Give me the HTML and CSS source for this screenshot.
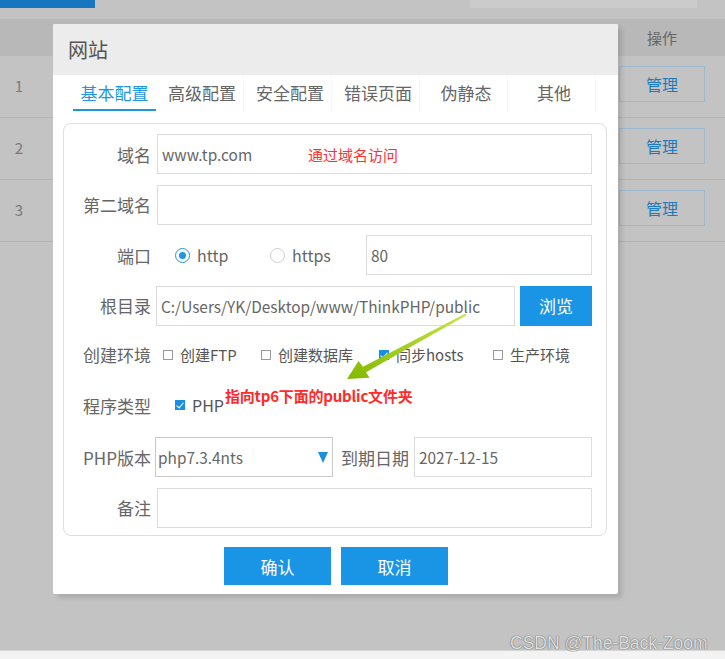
FILE: index.html
```html
<!DOCTYPE html>
<html lang="zh">
<head>
<meta charset="utf-8">
<title>网站</title>
<link rel="stylesheet" href="styles.css">
</head>
<body>
<div class="page">
  <div class="topbar">
    <div class="topbtn"></div>
    <div class="search"></div>
  </div>
  <div class="thead"><span class="op">操作</span></div>
  <div class="trow"><span class="num">1</span><span class="mgr">管理</span></div>
  <div class="trow"><span class="num">2</span><span class="mgr">管理</span></div>
  <div class="trow"><span class="num">3</span><span class="mgr">管理</span></div>
  <div class="spacer"></div>
  <div class="bottomstrip"></div>
</div>

<div class="modal">
  <div class="mhead">网站</div>
  <div class="tabs">
    <div class="tab active">基本配置</div>
    <div class="tab">高级配置</div>
    <div class="tab">安全配置</div>
    <div class="tab">错误页面</div>
    <div class="tab">伪静态</div>
    <div class="tab">其他</div>
  </div>
  <div class="panel">
    <div class="frow">
      <div class="lbl">域名</div>
      <div class="inp">www.tp.com</div>
    </div>
    <div class="frow">
      <div class="lbl">第二域名</div>
      <div class="inp"></div>
    </div>
    <div class="frow">
      <div class="lbl">端口</div>
      <div class="radios">
        <div class="ritem r1"><span class="radio on"></span><span>http</span></div>
        <div class="ritem"><span class="radio"></span><span>https</span></div>
      </div>
      <div class="inp">80</div>
    </div>
    <div class="frow">
      <div class="lbl">根目录</div>
      <div class="inp path">C:/Users/YK/Desktop/www/ThinkPHP/public</div>
      <div class="browse">浏览</div>
    </div>
    <div class="frow up">
      <div class="lbl">创建环境</div>
      <div class="checks">
        <div class="citem w1"><span class="cb"></span><span>创建FTP</span></div>
        <div class="citem w2"><span class="cb"></span><span>创建数据库</span></div>
        <div class="citem w3"><span class="cb on"></span><span>同步hosts</span></div>
        <div class="citem"><span class="cb"></span><span>生产环境</span></div>
      </div>
    </div>
    <div class="frow up">
      <div class="lbl">程序类型</div>
      <div class="checks prog">
        <div class="citem"><span class="cb on"></span><span class="php">PHP</span></div>
      </div>
    </div>
    <div class="frow">
      <div class="lbl">PHP版本</div>
      <div class="select"><span>php7.3.4nts</span><span class="tri"></span></div>
      <div class="lbl2">到期日期</div>
      <div class="inp">2027-12-15</div>
    </div>
    <div class="frow">
      <div class="lbl">备注</div>
      <div class="inp"></div>
    </div>
  </div>
  <div class="actions">
    <div class="btn">确认</div>
    <div class="btn">取消</div>
  </div>
</div>

<div class="note1">通过域名访问</div>
<div class="note2">指向tp6下面的public文件夹</div>
<svg class="arrow" width="130" height="75" viewBox="0 0 130 75">
  <defs>
    <linearGradient id="ag" x1="1" y1="0" x2="0" y2="1">
      <stop offset="0" stop-color="#c8e44a"/>
      <stop offset="1" stop-color="#84b900"/>
    </linearGradient>
  </defs>
  <polygon points="125.5,3.4 23,56.8 18.5,51 7,69 29.5,67.8 26,62.2 126.5,5.2" fill="url(#ag)"/>
</svg>
<div class="watermark">CSDN @The-Back-Zoom</div>
</body>
</html>
```

FILE: styles.css
```css
* { box-sizing: border-box; }
html, body { margin: 0; padding: 0; }
body {
  width: 725px;
  height: 659px;
  overflow: hidden;
  position: relative;
  background: #c3c3c3;
  font-family: "Noto Sans CJK SC", "Noto Sans", sans-serif;
  color: #666;
}
.page { height: 659px; display: flex; flex-direction: column; }
.topbar { height: 19px; display: flex; justify-content: space-between; }
.topbtn { width: 95px; height: 8px; background: #1677bf; }
.search { width: 227px; height: 8px; background: #cbcbcb; margin-right: 28px; }
.thead { height: 37px; background: #b8b8b8; display: flex; align-items: center; }
.op { margin-left: auto; width: 86px; margin-right: 20px; text-align: center; font-size: 15px; color: #666; }
.trow { height: 62px; border-bottom: 1px solid #b4b4b4; display: flex; align-items: center; }
.num { width: 38px; text-align: center; font-size: 15px; color: #7a7a7a; margin-bottom: 2px; }
.mgr {
  margin-left: auto; margin-right: 20px; width: 86px; height: 36px; margin-bottom: 5px;
  border: 1px solid #9db9ce; color: #1d7bbd; font-size: 16px;
  display: flex; align-items: center; justify-content: center;
}
.spacer { flex: 1; }
.bottomstrip { height: 9px; background: #f3f3f3; border-top: 1px solid #d6d6d6; }

.modal {
  position: absolute; left: 53px; top: 24px; width: 565px; height: 570px;
  background: #fff; border-radius: 2px;
  box-shadow: 4px 4px 4px rgba(0, 0, 0, 0.12);
}
.mhead {
  height: 51px; background: #ececec; padding-left: 15px;
  font-size: 20px; line-height: 51px; color: #555; border-radius: 2px 2px 0 0;
}
.tabs { display: flex; gap: 5px; padding-left: 20px; height: 36px; }
.tab {
  width: 83px; text-align: center; font-size: 17px; line-height: 35px; color: #666;
  border-right: 1px solid #f7f7f7;
}
.tab.active { color: #1e96e3; border-bottom: 2px solid #1e96e3; border-right: none; }

.panel {
  margin: 12px 11px 0 10px; height: 413px;
  border: 1px solid #dedede; border-radius: 8px;
  padding: 10px 14px 0 0;
  display: flex; flex-direction: column; gap: 10.5px;
}
.frow { height: 40px; display: flex; align-items: center; }
.frow.up { padding-bottom: 3px; }
.lbl { width: 93px; padding-right: 6px; text-align: right; font-size: 17px; color: #666; flex-shrink: 0; }
.lbl2 { font-size: 17px; color: #666; margin: 0 5px 0 8px; }
.inp {
  flex: 1; height: 40px; border: 1px solid #dcdcdc; padding-left: 4px;
  font-size: 15.4px; line-height: 38px; color: #666; white-space: nowrap; overflow: hidden;
}
.inp.path { margin-left: -1px; }
.browse {
  width: 72px; height: 40px; margin-left: 5px; background: #1a95e6; color: #fff;
  font-size: 17px; display: flex; align-items: center; justify-content: center;
}
.radios { width: 209px; display: flex; align-items: center; padding-left: 18px; font-size: 16px; }
.ritem { display: flex; align-items: center; gap: 7px; }
.ritem.r1 { width: 95px; }
.radio { width: 15px; height: 15px; border: 1px solid #cfcfcf; border-radius: 50%; display: inline-block; position: relative; }
.radio.on { border-color: #1e96e3; }
.radio.on::after {
  content: ""; position: absolute; left: 3px; top: 3px; width: 7px; height: 7px;
  border-radius: 50%; background: #1e96e3;
}
.checks { display: flex; align-items: center; padding-left: 6px; font-size: 15px; color: #555; }
.checks.prog { padding-left: 18px; }
.citem { display: flex; align-items: center; gap: 7px; }
.citem.w1 { width: 98px; }
.citem.w2 { width: 118px; }
.citem.w3 { width: 114px; }
.cb { width: 10px; height: 10px; border: 1px solid #9a9a9a; display: inline-block; position: relative; }
.cb.on { background: #1a8fe0; border-color: #1a8fe0; }
.cb.on::after {
  content: ""; position: absolute; left: 2px; top: 0px; width: 3px; height: 6px;
  border: solid #fff; border-width: 0 1.5px 1.5px 0; transform: rotate(40deg);
}
.php { font-size: 16px; color: #555; }
.select {
  width: 178px; height: 40px; margin-left: -2px; border: 1px solid #c9c9c9;
  display: flex; align-items: center; justify-content: space-between;
  padding: 0 4px 0 2px; font-size: 15.4px; color: #666;
}
.tri {
  width: 0; height: 0; border-left: 5.5px solid transparent; border-right: 5.5px solid transparent;
  border-top: 11px solid #1a8fe0;
}
.actions { display: flex; justify-content: center; gap: 10px; margin-top: 11px; padding-left: 1px; }
.btn {
  width: 107px; height: 38px; background: #1a95e6; color: #fff; font-size: 17px;
  display: flex; align-items: center; justify-content: center;
}

.note1 { position: absolute; left: 308px; top: 144px; font-size: 15px; line-height: 22px; color: #ff3030; }
.note2 { position: absolute; left: 225px; top: 385px; font-size: 15px; line-height: 22px; color: #ff2a2a; font-weight: 700; letter-spacing: -0.2px; }
.arrow { position: absolute; left: 340px; top: 310px; }
.watermark {
  position: absolute; left: 510px; top: 633px; font-family: "Liberation Sans", sans-serif;
  font-size: 17.5px; color: #dedede;
  text-shadow: 0 0 1px #6a6a6a, 0 0 1px #6a6a6a;
}
```
